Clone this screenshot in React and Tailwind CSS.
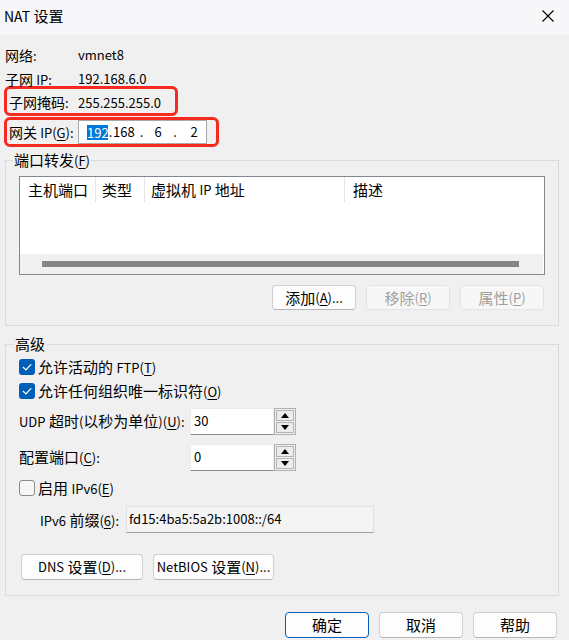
import React from "react";

const L = ({ children }) => <span className="text-[13px]">{children}</span>;
const M = ({ c }) => (
  <span className="text-[13px]">
    (<span className="underline underline-offset-[2px] decoration-1">{c}</span>)
  </span>
);

const Check = ({ checked }) =>
  checked ? (
    <div className="w-[16px] h-[16px] rounded-[3px] bg-[#005fb8] flex items-center justify-center shrink-0">
      <svg width="16" height="16" viewBox="0 0 16 16">
        <path d="M4.2 8.3 L6.9 10.9 L11.9 5.6" fill="none" stroke="#fff" strokeWidth="1.2" strokeLinecap="round" strokeLinejoin="round" />
      </svg>
    </div>
  ) : (
    <div className="w-[16px] h-[16px] rounded-[3px] border border-[#8a8a8a] bg-[#f6f6f6] shrink-0" />
  );

const Spinner = () => (
  <div className="w-[22px] h-[27px] border border-[#b0b0b0] p-[1px] flex flex-col gap-[1px] bg-[#f0f0f0]">
    <div className="flex-1 border border-[#b4b4b4] bg-[#ececec] flex items-center justify-center">
      <svg width="8" height="5" viewBox="0 0 8 5"><polygon points="0,5 4,0 8,5" fill="#000" /></svg>
    </div>
    <div className="flex-1 border border-[#b4b4b4] bg-[#ececec] flex items-center justify-center">
      <svg width="8" height="5" viewBox="0 0 8 5"><polygon points="0,0 8,0 4,5" fill="#000" /></svg>
    </div>
  </div>
);

const Btn = ({ children, w = "w-[84px]", disabled, primary, h = "h-[25px]" }) => (
  <div
    className={`${w} ${h} rounded-[4px] flex items-center justify-center border ${
      primary
        ? "border-[#005fb8] bg-[#fdfdfd] text-black"
        : disabled
        ? "border-[#e3e3e3] bg-[#f7f7f7] text-[#9f9f9f]"
        : "border-[#d0d0d0] border-b-[#b5b5b5] bg-[#fdfdfd] text-black"
    }`}
  >
    {children}
  </div>
);

export default function App() {
  return (
    <div className="w-[569px] h-[640px] bg-[#f0f0f0] text-[15px] text-black overflow-hidden font-['Noto_Sans_CJK_SC',sans-serif] leading-[18px]">
      {/* Title bar */}
      <div className="h-[35px] bg-[#f7f7f9] flex items-center justify-between pl-[4px] pr-[15px]">
        <span className="text-[15px] -mt-[3px]"><span className="text-[14px]">NAT</span> 设置</span>
        <svg width="12" height="12" viewBox="0 0 12 12" className="-mt-[3px]">
          <path d="M0.5 0.5 L11.5 11.5 M11.5 0.5 L0.5 11.5" stroke="#000" strokeWidth="1.1" />
        </svg>
      </div>

      <div className="text-[14px]">
        {/* Info rows */}
        <div className="mt-[11px] h-[18px] flex items-center pl-[5px]">
          <span className="w-[73px]">网络<L>:</L></span>
          <L>vmnet8</L>
        </div>
        <div className="mt-[6px] h-[18px] flex items-center pl-[5px]">
          <span className="w-[73px]">子网 <L>IP:</L></span>
          <L>192.168.6.0</L>
        </div>
        <div className="-mt-[2px] ml-[4px] w-[174px] h-[30px] border-[3px] border-[#f62a1f] rounded-[6px] flex items-center pt-[3px]">
          <span className="w-[71px] pl-[2px] shrink-0 whitespace-nowrap">子网掩码<L>:</L></span>
          <L>255.255.255.0</L>
        </div>
        <div className="mt-[1px] ml-[4px] w-[215px] h-[30px] border-[3px] border-[#f62a1f] rounded-[6px] flex items-center">
          <span className="w-[71px] pl-[2px] shrink-0 whitespace-nowrap">网关 <L>IP</L><M c="G" /><L>:</L></span>
          <div className="w-[129px] h-[24px] bg-white border border-[#a9a9a9] flex items-center pl-[8px] text-[13px]">
            <span className="w-[21px] h-[15px] leading-[15px] bg-[#0078d7] text-white text-center">192</span>
            <span className="w-[5px] text-center">.</span>
            <span className="w-[21px] text-center">168</span>
            <span className="w-[15px] text-center">.</span>
            <span className="w-[18px] text-center">6</span>
            <span className="w-[16px] text-center">.</span>
            <span className="w-[22px] text-center">2</span>
          </div>
        </div>
      </div>

      {/* Port forwarding group */}
      <fieldset className="mt-[3px] ml-[5px] w-[554px] border border-[#dcdcdc] pb-[15px]">
        <legend className="ml-[7px] px-[1px] leading-[20px]">
          端口转发<M c="F" />
        </legend>
        <div className="mt-[5px] ml-[13px] w-[526px] h-[99px] border border-[#828790] bg-white flex flex-col">
          <div className="h-[25px] flex items-stretch shrink-0">
            <div className="w-[76px] pl-[8px] flex items-center border-r border-[#e5e5e5] whitespace-nowrap">主机端口</div>
            <div className="w-[49px] pl-[6px] flex items-center border-r border-[#e5e5e5]">类型</div>
            <div className="w-[200px] pl-[6px] flex items-center border-r border-[#e5e5e5]">虚拟机&nbsp;<L>IP</L>&nbsp;地址</div>
            <div className="pl-[8px] flex items-center">描述</div>
          </div>
          <div className="flex-1" />
          <div className="h-[20px] mr-[1px] bg-[#f0f0f0] pt-[7px] pl-[22px] shrink-0">
            <div className="w-[477px] h-[6px] bg-[#858585]" />
          </div>
        </div>
        <div className="mt-[10px] flex justify-end gap-[10px] pr-[14px]">
          <Btn>添加<M c="A" /><L>...</L></Btn>
          <Btn disabled>移除<M c="R" /></Btn>
          <Btn disabled>属性<M c="P" /></Btn>
        </div>
      </fieldset>

      {/* Advanced group */}
      <fieldset className="mt-[8px] ml-[5px] w-[554px] border border-[#dcdcdc] pb-[15px]">
        <legend className="ml-[8px] px-[1px] leading-[20px]">高级</legend>
        <div className="mt-[5px] ml-[13px] h-[16px] flex items-center gap-[3px]">
          <Check checked />
          <span>允许活动的 <L>FTP</L><M c="T" /></span>
        </div>
        <div className="mt-[8px] ml-[13px] h-[16px] flex items-center gap-[3px]">
          <Check checked />
          <span>允许任何组织唯一标识符<M c="O" /></span>
        </div>
        <div className="mt-[9px] ml-[13px] h-[27px] flex items-center">
          <span className="w-[171px] shrink-0 whitespace-nowrap"><L>UDP</L> 超时<L>(</L>以秒为单位<L>)</L><M c="U" /><L>:</L></span>
          <div className="w-[84px] h-[27px] bg-white border border-[#ececec] border-b-[#8a8a8a] flex items-center pl-[3px] pb-[1px] text-[13px]">30</div>
          <Spinner />
        </div>
        <div className="mt-[9px] ml-[13px] h-[27px] flex items-center">
          <span className="w-[171px] shrink-0">配置端口<M c="C" /><L>:</L></span>
          <div className="w-[84px] h-[27px] bg-white border border-[#ececec] border-b-[#8a8a8a] flex items-center pl-[3px] pb-[1px] text-[13px]">0</div>
          <Spinner />
        </div>
        <div className="mt-[9px] ml-[13px] h-[16px] flex items-center gap-[3px]">
          <Check />
          <span>启用 <L>IPv6</L><M c="E" /></span>
        </div>
        <div className="mt-[10px] ml-[34px] h-[27px] flex items-center">
          <span className="w-[86px] shrink-0 pt-[1px] whitespace-nowrap"><L>IPv6</L> 前缀<M c="6" /><L>:</L></span>
          <div className="w-[248px] h-[27px] bg-[#f4f4f4] border border-[#e0e0e0] border-b-[#a0a0a0] pl-[2px] pt-[3px] text-[13px] leading-[18px]">
            fd15:4ba5:5a2b:1008::/64
          </div>
        </div>
        <div className="mt-[21px] ml-[15px] flex gap-[10px]">
          <Btn w="w-[122px]" h="h-[26px]"><L>DNS</L>&nbsp;设置<M c="D" /><L>...</L></Btn>
          <Btn w="w-[121px]" h="h-[26px]"><L>NetBIOS</L>&nbsp;设置<M c="N" /><L>...</L></Btn>
        </div>
      </fieldset>

      {/* Bottom buttons */}
      <div className="mt-[16px] flex justify-end gap-[10px] pr-[12px]">
        <Btn primary h="h-[26px]">确定</Btn>
        <Btn h="h-[26px]">取消</Btn>
        <Btn h="h-[26px]">帮助</Btn>
      </div>
    </div>
  );
}
